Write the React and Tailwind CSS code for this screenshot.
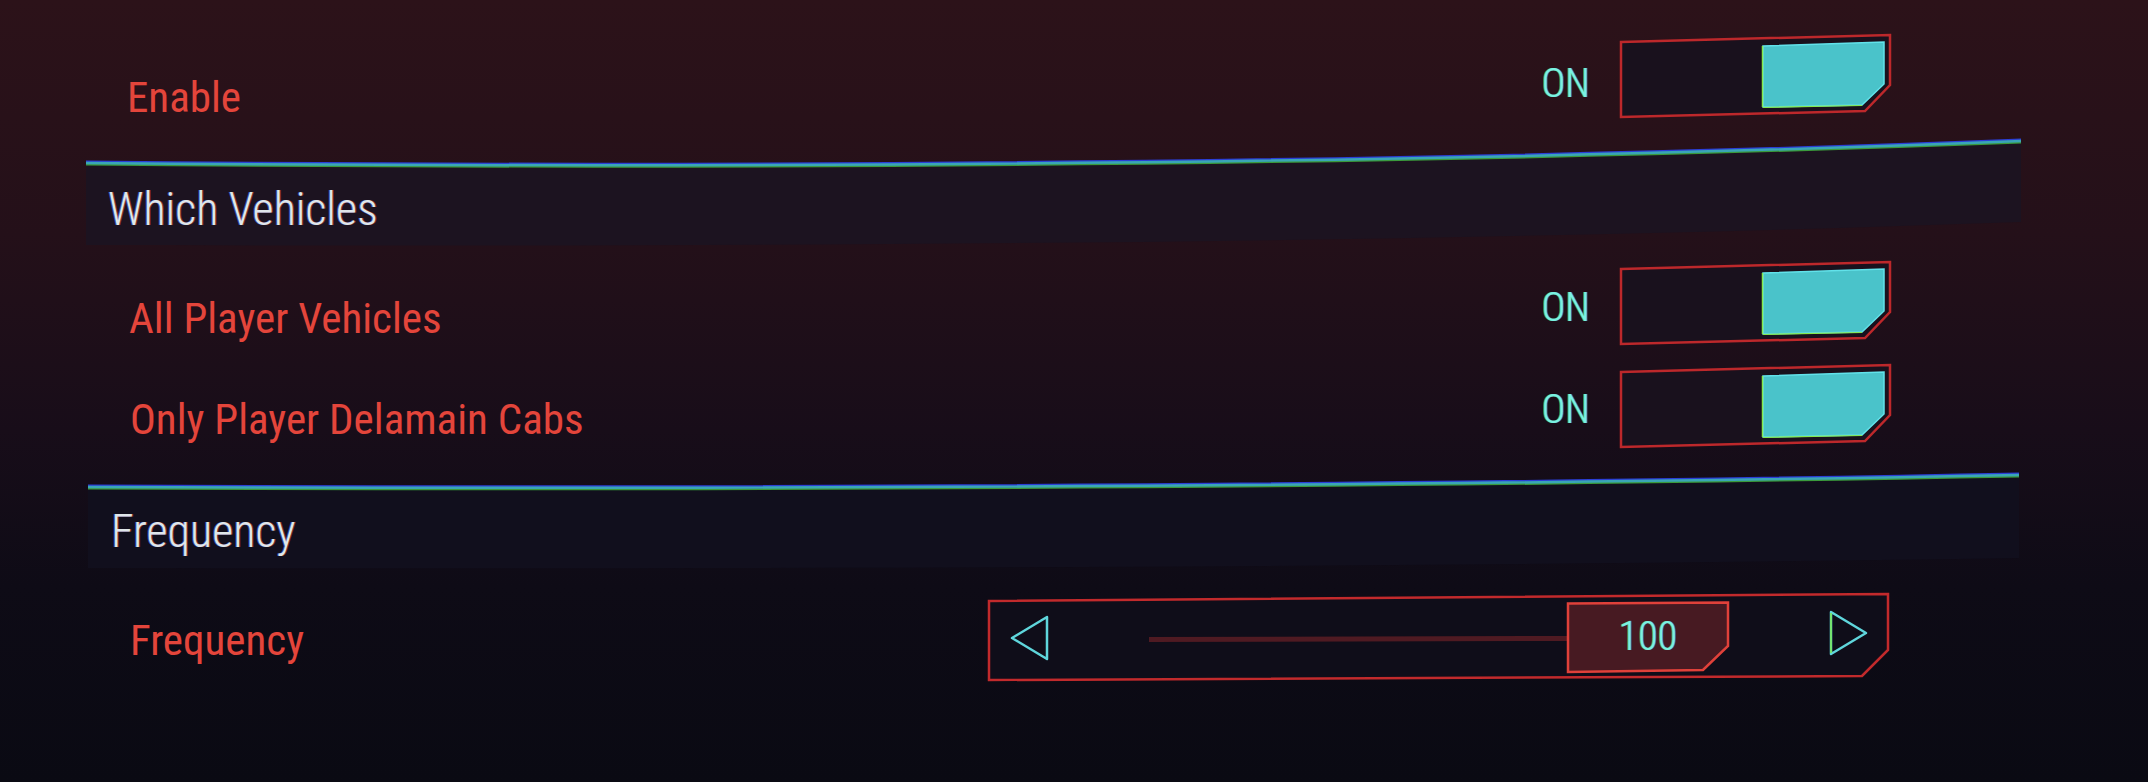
import React from 'react';

const FONT = "[font-family:'Roboto',sans-serif] [font-stretch:75%]";

const Divider = ({ d, panel, fill, height }) => (
  <svg width="1935" height={height} viewBox={`0 0 1935 ${height}`} className="absolute inset-0">
    <path d={panel} fill={fill} />
    <path d={d} fill="none" stroke="#2b3fd6" strokeWidth="2" transform="translate(0,-1.5)" />
    <path d={d} fill="none" stroke="#3a9a3c" strokeWidth="2" transform="translate(0,1.5)" />
    <path d={d} fill="none" stroke="#3aa6b6" strokeWidth="2.5" />
  </svg>
);

const Toggle = () => (
  <svg width="274" height="88" viewBox="0 0 274 88" className="block shrink-0">
    <polygon points="2,9 271,2 271,52 246,78 2,84" fill="#19111d" stroke="#bd282b" strokeWidth="2.5" />
    <polygon points="144,13 265,9 265,51 243,72 144,74" fill="#4ac3ca" stroke="#62e2ea" strokeWidth="1.5" />
    <line x1="143.5" y1="13" x2="143.5" y2="74" stroke="#86e84e" strokeWidth="1.5" />
    <line x1="144" y1="74.5" x2="243" y2="72.5" stroke="#86e84e" strokeWidth="1.2" />
  </svg>
);

const ON_TEXT = 'text-[40px] leading-[40px] [font-weight:340] text-[#7af2e2] [text-shadow:-1px_0_rgba(120,255,90,0.7),1px_0_rgba(60,110,255,0.7)]';
const LABEL_TEXT = 'text-[43px] leading-[43px] [font-weight:390] text-[#e4453b]';

const ToggleRow = ({ label, h, labelTop, labelLeft, onTop, toggleTop }) => (
  <div className={`flex ${h}`}>
    <div className={`${labelTop} ${labelLeft} ${LABEL_TEXT}`}>{label}</div>
    <div className="ml-auto mr-[128px] flex items-start">
      <span className={`${onTop} mr-[29px] ${ON_TEXT}`}>ON</span>
      <div className={toggleTop}>
        <Toggle />
      </div>
    </div>
  </div>
);

const Slider = () => (
  <div className="relative ml-auto mr-[129px] mt-[11px] w-[906px] h-[92px]">
    <svg width="906" height="92" viewBox="0 0 906 92" className="block">
      <polygon points="3,10 902,3 902,59 876,85 3,89" fill="#0f0d19" stroke="#c22a2c" strokeWidth="2.5" />
      <polygon points="61,26 26,47 61,68" fill="none" stroke="#5fd6dc" strokeWidth="2.5" strokeLinejoin="round" />
      <polygon points="845,21 880,42 845,63" fill="none" stroke="#5fd6dc" strokeWidth="2.5" strokeLinejoin="round" />
      <line x1="845" y1="22" x2="845" y2="62" stroke="#7de84e" strokeWidth="1.5" />
      <line x1="163" y1="48.5" x2="582" y2="47.5" stroke="#4f1a22" strokeWidth="5" />
      <polygon points="582,12.5 742,11.5 742,55 717,79 582,81" fill="#471a22" stroke="#e0413a" strokeWidth="2.5" />
    </svg>
    <span className={`absolute left-[622px] top-[26px] w-[80px] text-center ${ON_TEXT}`}>100</span>
  </div>
);

const HEADER_TEXT = 'text-[46px] leading-[46px] [font-weight:360] text-[#dfe6ea] [text-shadow:-1px_0_rgba(90,120,255,0.6),1px_0_rgba(255,90,60,0.5)]';

export default function App() {
  return (
    <div className={`w-full h-[782px] overflow-hidden bg-[linear-gradient(180deg,#2c1219_0%,#241019_30%,#180d19_55%,#0e0b16_75%,#0a0a13_100%)] ${FONT}`}>
      <div className="ml-[86px] w-[1935px] flex flex-col">
        <ToggleRow label="Enable" h="h-[130px]" labelTop="pt-[76px]" labelLeft="pl-[41px]" onTop="mt-[64px]" toggleTop="mt-[33px]" />

        <div className="relative h-[125px]">
          <Divider
            height={125}
            d="M0 33 C600 38 1300 36 1935 11"
            panel="M0 33 C600 38 1300 36 1935 11 L1935 92 C1300 115 600 117 0 115 Z"
            fill="#1c1320"
          />
          <div className={`relative pt-[56px] pl-[22px] ${HEADER_TEXT}`}>Which Vehicles</div>
        </div>

        <ToggleRow label="All Player Vehicles" h="h-[105px]" labelTop="pt-[42px]" labelLeft="pl-[43px]" onTop="mt-[33px]" toggleTop="mt-[5px]" />
        <ToggleRow label="Only Player Delamain Cabs" h="h-[110px]" labelTop="pt-[38px]" labelLeft="pl-[44px]" onTop="mt-[30px]" toggleTop="mt-[3px]" />

        <div className="relative h-[110px]">
          <Divider
            height={110}
            d="M2 17 C600 19 1300 17 1933 5"
            panel="M2 17 C600 19 1300 17 1933 5 L1933 88 C1300 98 600 99 2 98 Z"
            fill="#110f1d"
          />
          <div className={`relative pt-[38px] pl-[25px] ${HEADER_TEXT}`}>Frequency</div>
        </div>

        <div className="flex h-[202px]">
          <div className={`pt-[39px] pl-[44px] ${LABEL_TEXT}`}>Frequency</div>
          <Slider />
        </div>
      </div>
    </div>
  );
}
